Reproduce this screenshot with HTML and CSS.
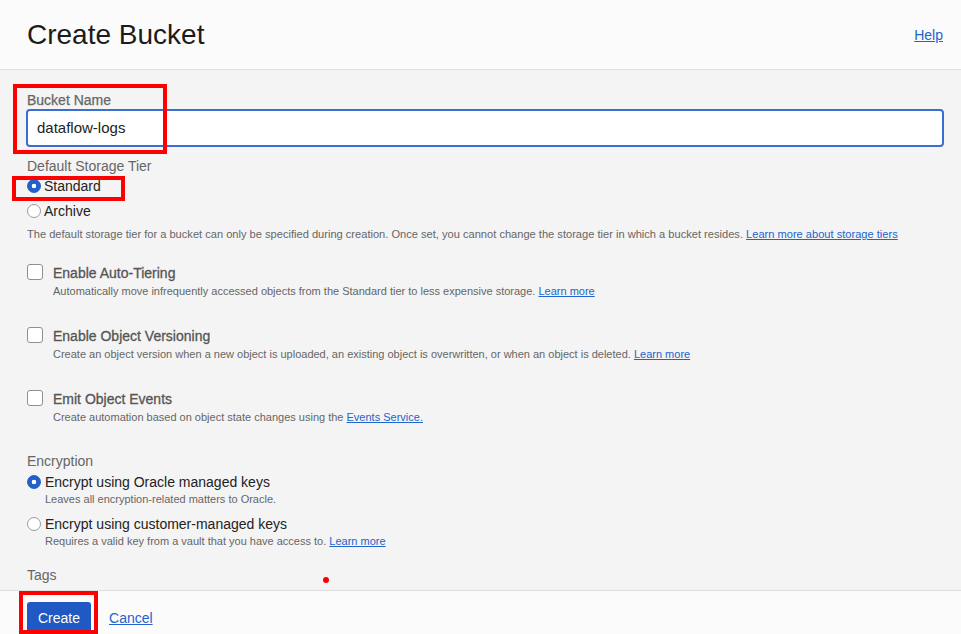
FILE: index.html
```html
<!DOCTYPE html>
<html lang="en">
<head>
<meta charset="utf-8">
<title>Create Bucket</title>
<link rel="stylesheet" href="styles.css">
</head>
<body>
<div class="page">
  <header class="hdr">
    <h1 class="title">Create Bucket</h1>
    <a class="help" href="#">Help</a>
  </header>

  <main class="form">
    <div class="field-label">Bucket Name</div>
    <div class="input">dataflow-logs</div>

    <div class="group-label">Default Storage Tier</div>
    <div class="radios">
      <div class="radio-row"><span class="radio on"></span><span>Standard</span></div>
      <div class="radio-row"><span class="radio"></span><span>Archive</span></div>
    </div>
    <p class="help-text">The default storage tier for a bucket can only be specified during creation. Once set, you cannot change the storage tier in which a bucket resides. <a href="#">Learn more about storage tiers</a></p>

    <div class="check-block first">
      <span class="checkbox"></span>
      <span class="check-label">Enable Auto-Tiering</span>
      <span class="check-desc">Automatically move infrequently accessed objects from the Standard tier to less expensive storage. <a href="#">Learn more</a></span>
    </div>
    <div class="check-block">
      <span class="checkbox"></span>
      <span class="check-label">Enable Object Versioning</span>
      <span class="check-desc">Create an object version when a new object is uploaded, an existing object is overwritten, or when an object is deleted. <a href="#">Learn more</a></span>
    </div>
    <div class="check-block">
      <span class="checkbox"></span>
      <span class="check-label">Emit Object Events</span>
      <span class="check-desc">Create automation based on object state changes using the <a href="#">Events Service.</a></span>
    </div>

    <div class="group-label enc">Encryption</div>
    <div class="enc-option">
      <div class="radio-row wide"><span class="radio on"></span><span>Encrypt using Oracle managed keys</span></div>
      <div class="opt-desc">Leaves all encryption-related matters to Oracle.</div>
    </div>
    <div class="enc-option second">
      <div class="radio-row wide"><span class="radio"></span><span>Encrypt using customer-managed keys</span></div>
      <div class="opt-desc">Requires a valid key from a vault that you have access to. <a href="#">Learn more</a></div>
    </div>

    <div class="group-label tags">Tags</div>
  </main>

  <footer class="ftr">
    <button class="btn" type="button">Create</button>
    <a class="cancel" href="#">Cancel</a>
  </footer>

  <div class="mark mark-name"></div>
  <div class="mark mark-tier"></div>
  <div class="mark mark-create"></div>
  <div class="dot"></div>
</div>
</body>
</html>
```

FILE: styles.css
```css
html, body {
  margin: 0;
  height: 100%;
}

body {
  font-family: "Liberation Sans", Arial, Helvetica, sans-serif;
  background: #f4f4f4;
  color: #222;
}

a {
  color: #2363cc;
  text-decoration: underline;
}

.page {
  position: relative;
  height: 634px;
  display: flex;
  flex-direction: column;
  overflow: hidden;
}

.hdr {
  flex: none;
  box-sizing: border-box;
  height: 70px;
  border-bottom: 1px solid #dedede;
  background: #fbfbfb;
  display: flex;
  align-items: center;
  justify-content: space-between;
  padding: 1px 18px 0 27px;
}

.title {
  margin: 0;
  font-size: 28px;
  font-weight: 400;
  line-height: 32px;
  color: #1c1c1c;
}

.help {
  font-size: 14px;
}

.form {
  flex: 1;
  min-height: 0;
  padding: 22px 17px 0 27px;
}

.field-label,
.group-label {
  font-size: 14px;
  line-height: 17px;
  color: #666;
}

.field-label {
  -webkit-text-stroke: 0.25px #666;
}

.input {
  height: 34px;
  margin-left: -1px;
  border: 2px solid #3a6ed0;
  border-radius: 4px;
  background: #fff;
  padding-left: 9px;
  font-size: 15px;
  line-height: 34px;
  color: #222;
}

.group-label {
  margin-top: 11px;
}

.radios {
  margin-top: 1px;
}

.radio-row {
  display: flex;
  align-items: center;
  gap: 3px;
  height: 20px;
  font-size: 14px;
  color: #222;
}

.radio-row + .radio-row {
  margin-top: 5px;
}

.radio-row.wide {
  gap: 4px;
}

.radio {
  flex: none;
  width: 14px;
  height: 14px;
  box-sizing: border-box;
  border-radius: 50%;
  border: 1px solid #9c9c9c;
  background: #fff;
}

.radio.on {
  border-color: #2160c8;
  background: radial-gradient(circle, #fff 0 2px, #2160c8 2.6px);
}

.help-text {
  margin: 6px 0 0;
  font-size: 11.1px;
  line-height: 15px;
  color: #666;
}

.check-block {
  display: grid;
  grid-template-columns: 16px 1fr;
  column-gap: 10px;
  margin-top: 28px;
}

.check-block.first {
  margin-top: 22px;
}

.checkbox {
  width: 16px;
  height: 16px;
  box-sizing: border-box;
  border: 1px solid #909090;
  border-radius: 3px;
  background: #fff;
}

.check-label {
  font-size: 14px;
  line-height: 18px;
  color: #555;
  -webkit-text-stroke: 0.3px #555;
}

.check-desc {
  grid-column: 2;
  margin-top: 1px;
  font-size: 11px;
  line-height: 16px;
  color: #666;
}

.group-label.enc {
  margin-top: 28px;
}

.enc-option {
  margin-top: 2px;
}

.enc-option.second {
  margin-top: 7px;
}

.opt-desc {
  padding-left: 18px;
  font-size: 11px;
  line-height: 15px;
  color: #666;
}

.group-label.tags {
  margin-top: 18px;
}

.ftr {
  flex: none;
  box-sizing: border-box;
  height: 44px;
  border-top: 1px solid #dedede;
  background: #fbfbfb;
  padding: 11px 0 0 27px;
  display: flex;
  align-items: flex-start;
  gap: 18px;
}

.btn {
  flex: none;
  height: 32px;
  padding: 0 11px;
  border: none;
  border-radius: 3px;
  background: #2159c4;
  color: #fff;
  font-family: inherit;
  font-size: 14px;
  line-height: 32px;
}

.cancel {
  font-size: 14px;
  line-height: 32px;
}

.mark {
  position: absolute;
  box-sizing: border-box;
  border: 4px solid #ff0000;
}

.mark-name {
  left: 13px;
  top: 84px;
  width: 154px;
  height: 70px;
}

.mark-tier {
  left: 12px;
  top: 176px;
  width: 113px;
  height: 25px;
}

.mark-create {
  left: 19px;
  top: 591px;
  width: 79px;
  height: 43px;
}

.dot {
  position: absolute;
  left: 323px;
  top: 577px;
  width: 6px;
  height: 6px;
  border-radius: 50%;
  background: #ff0000;
}
```
